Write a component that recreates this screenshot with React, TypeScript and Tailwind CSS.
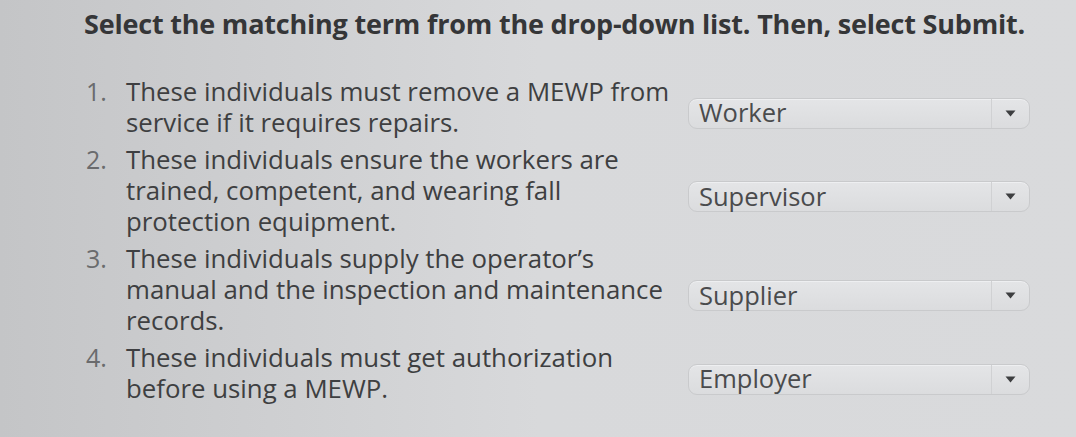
import React from "react";

const items = [
  { n: "1.", lines: ["These individuals must remove a MEWP from", "service if it requires repairs."], v: "Worker" },
  { n: "2.", lines: ["These individuals ensure the workers are", "trained, competent, and wearing fall", "protection equipment."], v: "Supervisor" },
  { n: "3.", lines: ["These individuals supply the operator\u2019s", "manual and the inspection and maintenance", "records."], v: "Supplier" },
  { n: "4.", lines: ["These individuals must get authorization", "before using a MEWP."], v: "Employer" },
];

function Select({ value }: { value: string }) {
  return (
    <div className="mt-[12px] flex h-[31px] w-[342px] items-stretch rounded-[9px] border border-[#c9cacc] bg-gradient-to-b from-[#e4e5e7] to-[#dbdcde] shadow-[inset_0_1px_0_#eeeff1]">
      <div className="flex flex-1 items-center pl-[10px] text-[25.5px] leading-none text-[#4a4b4d]">{value}</div>
      <div className="flex w-[38px] items-center justify-center border-l border-[#d0d1d3]">
        <svg width="11" height="7" viewBox="0 0 11 7"><path d="M0.5 0.5 H10.5 L5.5 6.5 Z" fill="#3d3e40" /></svg>
      </div>
    </div>
  );
}

export default function App() {
  return (
    <div
      className="h-[437px] w-[1076px] overflow-hidden bg-gradient-to-r from-[#c4c5c7] via-[#d8d9db] to-[#d9dadc] text-[#3e3f41]"
      style={{ fontFamily: '"Open Sans", "Liberation Sans", sans-serif' }}
    >
      <div className="pl-[84px] pt-[5px] text-[27px] font-bold leading-[38px] tracking-[-0.2px] text-[#353638]">
        Select the matching term from the drop-down list. Then, select Submit.
      </div>
      <div className="mt-[33px] flex flex-col gap-[6px] pl-[86px]">
        {items.map((it) => (
          <div key={it.n} className="flex items-center">
            <div className="flex w-[602px]">
              <div className="w-[40px] text-[25px] leading-[31px] text-[#6a6b6d]">{it.n}</div>
              <div className="text-[25.8px] leading-[31px] text-[#3e3f41]">
                {it.lines.map((l) => (
                  <div key={l} className="whitespace-nowrap">{l}</div>
                ))}
              </div>
            </div>
            <Select value={it.v} />
          </div>
        ))}
      </div>
    </div>
  );
}
